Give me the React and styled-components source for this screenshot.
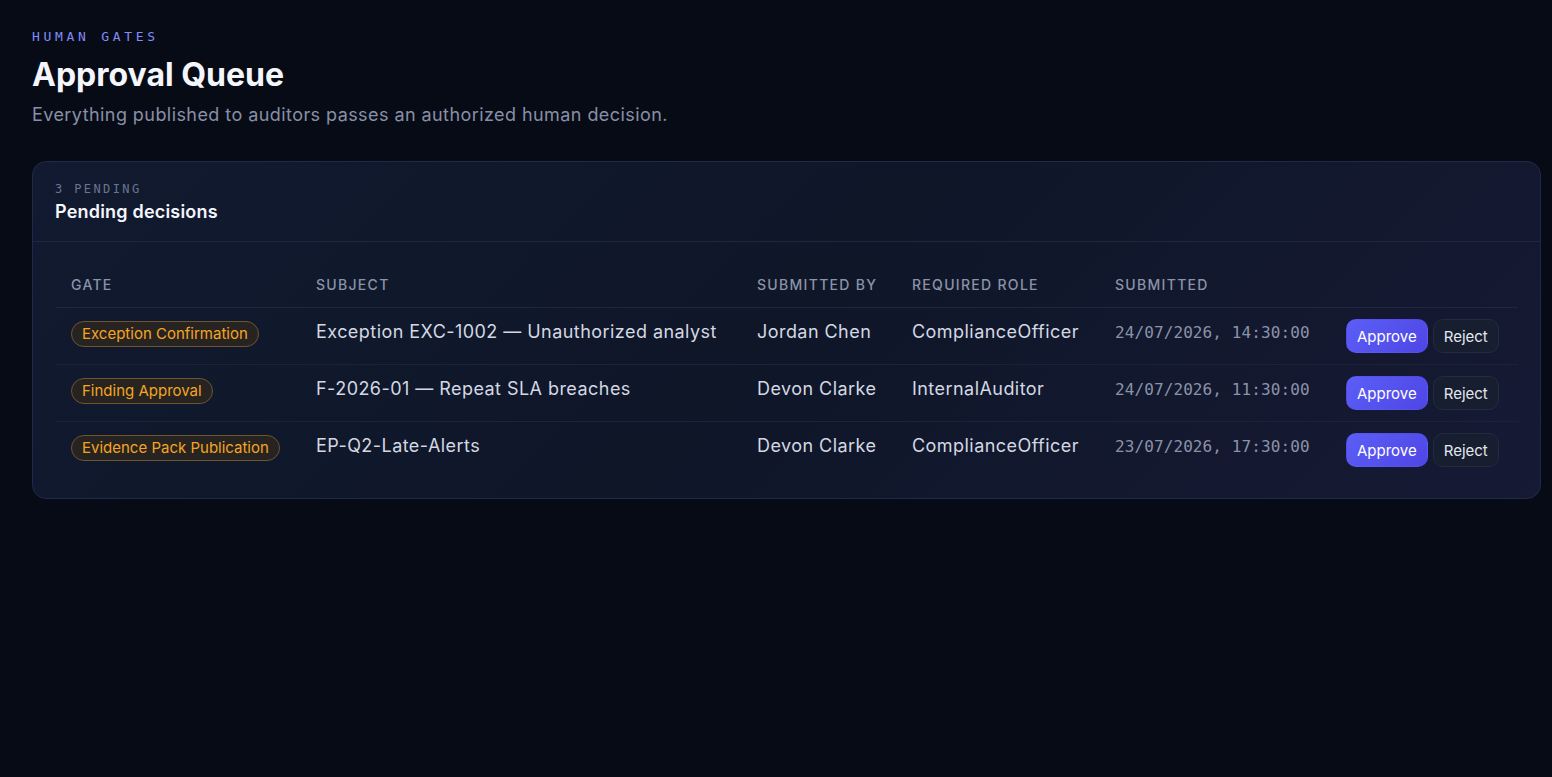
import React from "react";
import styled, { createGlobalStyle } from "styled-components";

const GlobalStyle = createGlobalStyle`
  html, body {
    margin: 0;
    padding: 0;
    background: #070b16;
    min-height: 100%;
  }
  body {
    font-family: Inter, "Noto Sans", sans-serif;
    color: #e6e9f0;
  }
`;

const Page = styled.main`
  min-height: 100vh;
  box-sizing: border-box;
  padding: 29px 11px 40px 32px;
`;

const Eyebrow = styled.div`
  font-family: "DejaVu Sans Mono", monospace;
  font-size: 13px;
  letter-spacing: 3.7px;
  color: #818cf8;
  text-transform: uppercase;
`;

const Title = styled.h1`
  margin: 11px 0 0;
  font-size: 32px;
  line-height: 40px;
  font-weight: 700;
  color: #f4f6fb;
`;

const Subtitle = styled.p`
  margin: 7px 0 0;
  font-size: 18px;
  line-height: 26px;
  color: #8790a6;
  letter-spacing: 0.43px;
`;

const Card = styled.section`
  margin-top: 33px;
  border: 1px solid #1f2a4a;
  border-radius: 14px;
  background: linear-gradient(135deg, #111a30 0%, #0f1628 50%, #161a35 100%);
  overflow: hidden;
`;

const CardHeader = styled.header`
  padding: 20px 22px 17px;
  border-bottom: 1px solid #1d2740;
`;

const Count = styled.div`
  font-family: "DejaVu Sans Mono", monospace;
  font-size: 12px;
  letter-spacing: 2.4px;
  color: #6b7590;
`;

const CardTitle = styled.h2`
  margin: 4px 0 0;
  font-size: 18px;
  line-height: 24px;
  font-weight: 600;
  color: #f4f6fb;
  letter-spacing: 0.2px;
`;

const CardBody = styled.div`
  padding: 26px 22px 20px 23px;
`;

const Table = styled.table`
  width: 100%;
  border-collapse: collapse;
  table-layout: fixed;
`;

const Th = styled.th`
  text-align: left;
  font-size: 14px;
  font-weight: 500;
  letter-spacing: 1.3px;
  text-transform: uppercase;
  color: #8a93a8;
  padding: 8px 15px 14px;
  border-bottom: 1px solid #1d2740;
`;

const Row = styled.tr`
  & + & td {
    border-top: 1px solid #1a2338;
  }
`;

const Td = styled.td`
  padding: 11px 15px;
  font-size: 18px;
  line-height: 26px;
  letter-spacing: 0.45px;
  color: #d4d8e2;
  vertical-align: top;
  white-space: nowrap;
`;

const Badge = styled.span`
  display: inline-block;
  margin-top: 2px;
  padding: 2px 10px;
  font-size: 15px;
  line-height: 20px;
  letter-spacing: 0;
  color: #f5a524;
  background: #272320;
  border: 1px solid #6e5530;
  border-radius: 999px;
`;

const Mono = styled.span`
  font-family: "DejaVu Sans Mono", monospace;
  font-size: 16px;
  letter-spacing: 0.1px;
  color: #8b93a7;
`;

const Actions = styled.div`
  display: flex;
  gap: 5px;
`;

const Button = styled.button`
  height: 34px;
  padding: 0 10px;
  border-radius: 10px;
  font-family: Inter, sans-serif;
  font-size: 15px;
  cursor: pointer;
  color: ${(p) => (p.$primary ? "#ffffff" : "#e4e7ee")};
  background: ${(p) =>
    p.$primary ? "linear-gradient(135deg, #5b5ef6, #4f46e5)" : "#161e30"};
  border: 1px solid ${(p) => (p.$primary ? "transparent" : "#222b40")};
`;

const rows = [
  {
    gate: "Exception Confirmation",
    subject: "Exception EXC-1002 — Unauthorized analyst",
    by: "Jordan Chen",
    role: "ComplianceOfficer",
    at: "24/07/2026, 14:30:00",
  },
  {
    gate: "Finding Approval",
    subject: "F-2026-01 — Repeat SLA breaches",
    by: "Devon Clarke",
    role: "InternalAuditor",
    at: "24/07/2026, 11:30:00",
  },
  {
    gate: "Evidence Pack Publication",
    subject: "EP-Q2-Late-Alerts",
    by: "Devon Clarke",
    role: "ComplianceOfficer",
    at: "23/07/2026, 17:30:00",
  },
];

export default function App() {
  return (
    <Page>
      <GlobalStyle />
      <Eyebrow>Human Gates</Eyebrow>
      <Title>Approval Queue</Title>
      <Subtitle>
        Everything published to auditors passes an authorized human decision.
      </Subtitle>

      <Card>
        <CardHeader>
          <Count>3 PENDING</Count>
          <CardTitle>Pending decisions</CardTitle>
        </CardHeader>
        <CardBody>
          <Table>
            <colgroup>
              <col style={{ width: 245 }} />
              <col style={{ width: 441 }} />
              <col style={{ width: 155 }} />
              <col style={{ width: 203 }} />
              <col style={{ width: 231 }} />
              <col />
            </colgroup>
            <thead>
              <tr>
                <Th>Gate</Th>
                <Th>Subject</Th>
                <Th>Submitted by</Th>
                <Th>Required role</Th>
                <Th>Submitted</Th>
                <Th />
              </tr>
            </thead>
            <tbody>
              {rows.map((r) => (
                <Row key={r.subject}>
                  <Td>
                    <Badge>{r.gate}</Badge>
                  </Td>
                  <Td>{r.subject}</Td>
                  <Td>{r.by}</Td>
                  <Td>{r.role}</Td>
                  <Td>
                    <Mono>{r.at}</Mono>
                  </Td>
                  <Td>
                    <Actions>
                      <Button $primary>Approve</Button>
                      <Button>Reject</Button>
                    </Actions>
                  </Td>
                </Row>
              ))}
            </tbody>
          </Table>
        </CardBody>
      </Card>
    </Page>
  );
}
